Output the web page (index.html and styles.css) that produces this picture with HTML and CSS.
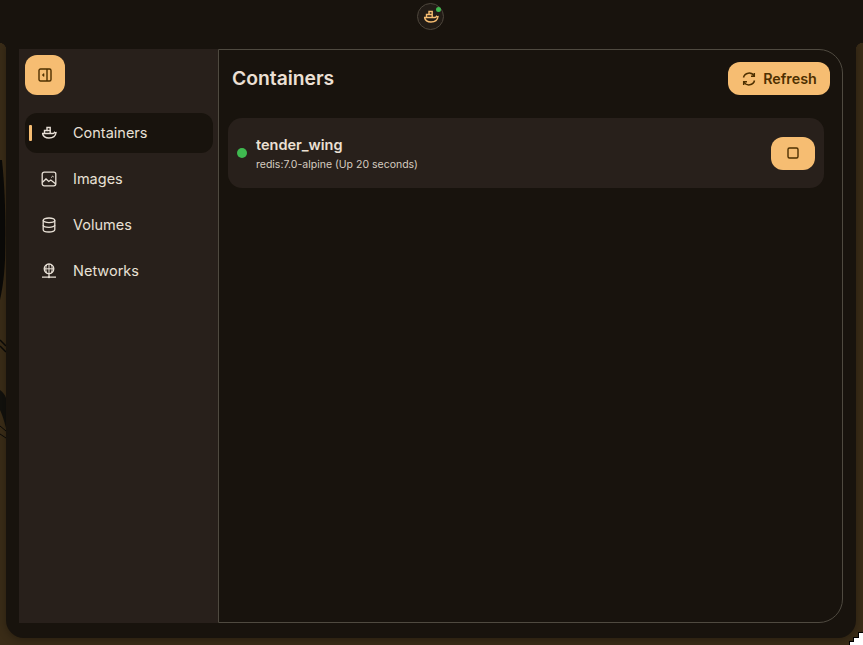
FILE: index.html
```html
<!DOCTYPE html>
<html lang="en">

<head>
    <meta charset="UTF-8">
    <meta name="viewport" content="width=device-width, initial-scale=1.0">
    <title>Containers</title>
    <link rel="stylesheet" href="styles.css">
</head>

<body>
    <!-- wallpaper showing at the left edge -->
    <svg class="wallpaper" width="6" height="300" viewBox="0 0 6 300" fill="none">
        <path d="M0 10h2c3 30 4 60 3 100-1 20-3 30-5 40z" fill="#0b0a08" />
        <path d="M0 190l6 6M0 196l6 6" stroke="#0b0a08" stroke-width="1.500" />
        <path d="M0 240c3 2 5 5 6 8v30c-2-8-4-14-6-18z" fill="#12110d" />
        <path d="M0 276l6 5M0 284l6 4" stroke="#0b0a08" />
    </svg>
    <div class="topbar">
        <div class="tray-icon">
            <svg width="16" height="16" viewBox="0 0 16 16" fill="none" stroke="#f6bd72" stroke-width="1.400">
                <path d="M1 8.500h10.500c.8 0 1.600-.5 2-1.200.5.400 1 .500 1.500.400-.4 3-2.800 5.300-7 5.300-3.600 0-5.800-1.500-6.500-4.500z" />
                <path d="M3.500 8.200V5.500H6V2.500h3.200v5.700M6 5.500h3.200" />
            </svg>
            <span class="tray-dot"></span>
        </div>
    </div>
    <div class="window">
        <aside class="sidebar">
            <button class="toggle-btn">
                <svg width="14" height="14" viewBox="0 0 14 14" fill="none" stroke="#4e3000" stroke-width="1.400">
                    <rect x="1" y="1" width="12" height="12" rx="1.500" />
                    <path d="M9 1v12" />
                    <path d="M6 5.500v3L4.200 7z" fill="#4e3000" stroke-width="0.600" />
                </svg>
            </button>
            <nav class="nav">
                <a class="nav-item active">
                    <span class="nav-marker"></span>
                    <svg class="nav-icon" width="16" height="16" viewBox="0 0 16 16" fill="none" stroke="#e8e0d6" stroke-width="1.400">
                        <path d="M1 8.500h10.500c.8 0 1.600-.5 2-1.200.5.400 1 .500 1.500.400-.4 3-2.800 5.300-7 5.300-3.600 0-5.800-1.500-6.500-4.500z" />
                        <path d="M3.500 8.200V5.500H6V2.500h3.200v5.700" />
                        <path d="M6 5.500h3.200" />
                    </svg>
                    <span>Containers</span>
                </a>
                <a class="nav-item">
                    <svg class="nav-icon" width="16" height="16" viewBox="0 0 16 16" fill="none" stroke="#e8e0d6" stroke-width="1.300">
                        <rect x="1.200" y="1.200" width="13.600" height="13.600" rx="2" />
                        <path d="M1.200 11.500l3.800-3.500 2.800 2.500 2-1.500 5 4" />
                        <path d="M10.200 6.500l1.500-1.300 1 .8" stroke-width="1" />
                    </svg>
                    <span>Images</span>
                </a>
                <a class="nav-item">
                    <svg class="nav-icon" width="16" height="16" viewBox="0 0 16 16" fill="none" stroke="#e8e0d6" stroke-width="1.300">
                        <ellipse cx="8" cy="3.300" rx="5.800" ry="2.300" />
                        <path d="M2.200 3.300v9.400c0 1.200 2.600 2.300 5.800 2.300s5.800-1.100 5.800-2.300V3.300" />
                        <path d="M2.200 8c0 1.200 2.600 2.300 5.800 2.300s5.800-1.100 5.800-2.300" />
                    </svg>
                    <span>Volumes</span>
                </a>
                <a class="nav-item">
                    <svg class="nav-icon" width="16" height="16" viewBox="0 0 16 16" fill="none" stroke="#e8e0d6" stroke-width="1.300">
                        <circle cx="8" cy="5.800" r="4.800" />
                        <path d="M3.200 5.800h9.600M8 1v9.600M5.600 1.800c-1 2.500-1 5.500 0 8M10.400 1.800c1 2.500 1 5.500 0 8" stroke-width="1" />
                        <path d="M8 10.500v3.500M1 14.200h14" />
                        <circle cx="8" cy="14.200" r="1" fill="#e8e0d6" stroke="none" />
                    </svg>
                    <span>Networks</span>
                </a>
            </nav>
        </aside>
        <main class="content">
            <header class="content-header">
                <h1>Containers</h1>
                <button class="refresh-btn">
                    <svg width="16" height="16" viewBox="0 0 16 16" fill="none" stroke="#4e3000" stroke-width="1.500">
                        <path d="M2.500 6.500A5.700 5.700 0 0 1 13 5" />
                        <path d="M13.500 9.500A5.700 5.700 0 0 1 3 11" />
                        <path d="M13.300 2v3.300H10M2.700 14v-3.300H6" />
                    </svg>
                    Refresh
                </button>
            </header>
            <div class="container-row">
                <span class="status-dot"></span>
                <div class="container-info">
                    <div class="container-name">tender_wing</div>
                    <div class="container-meta">redis:7.0-alpine (Up 20 seconds)</div>
                </div>
                <button class="stop-btn">
                    <svg width="14" height="14" viewBox="0 0 14 14" fill="none" stroke="#4e3000" stroke-width="1.400">
                        <rect x="2" y="2" width="10" height="10" rx="1.500" />
                    </svg>
                </button>
            </div>
        </main>
    </div>
    <!-- mouse pointer, bottom right corner -->
    <svg class="pointer" width="14" height="13" viewBox="0 0 14 13" shape-rendering="crispEdges">
        <path d="M9 0h5v13H0V9h4V5h5z" fill="#000" />
        <path d="M10 1h4v12H1v-3h4V6h5z" fill="#fff" />
    </svg>
</body>

</html>
```

FILE: styles.css
```css
body {
    position: relative;
    margin: 0;
    height: 645px;
    overflow: hidden;
    font-family: 'Inter', 'Roboto', sans-serif;
    background-color: #3a2c17;
    color: #ece0d4;
}

.wallpaper {
    position: absolute;
    left: 0;
    top: 150px;
}

.pointer {
    position: absolute;
    right: 0;
    bottom: 0;
}

.topbar {
    position: relative;
    z-index: 1;
    height: 43px;
    background-color: #18130d;
    display: flex;
    justify-content: center;
    padding-top: 3px;
    box-sizing: border-box;
}

.tray-icon {
    position: relative;
    width: 27px;
    height: 27px;
    border: 1px solid #4d463c;
    border-radius: 50%;
    box-sizing: border-box;
    background-color: #221c16;
    display: flex;
    align-items: center;
    justify-content: center;
    margin-left: -2px;
}

.tray-dot {
    position: absolute;
    top: 3px;
    right: 2px;
    width: 5px;
    height: 5px;
    border-radius: 50%;
    background-color: #3fb950;
}

.window {
    position: relative;
    height: 595px;
    margin: 0 7px 0 6px;
    padding: 6px 13px 15px 13px;
    box-sizing: border-box;
    background-color: #18130d;
    border-radius: 0 0 18px 18px;
    box-shadow: 0 2px 8px rgba(0, 0, 0, 0.3);
    display: flex;
}

/* inverted corners where the window meets the top bar */
.window::before,
.window::after {
    content: "";
    position: absolute;
    top: 0;
    width: 7px;
    height: 7px;
}

.window::before {
    left: -7px;
    background: radial-gradient(circle at 0 100%, transparent 7px, #18130d 7.5px);
}

.window::after {
    right: -7px;
    background: radial-gradient(circle at 100% 100%, transparent 7px, #18130d 7.5px);
}

.sidebar {
    width: 199px;
    background-color: #28201b;
    padding: 6px 5px 6px 6px;
    box-sizing: border-box;
    flex-shrink: 0;
}

.toggle-btn {
    width: 40px;
    height: 40px;
    border: none;
    border-radius: 12px;
    background-color: #f6bd72;
    display: flex;
    align-items: center;
    justify-content: center;
    padding: 0;
}

.nav {
    margin-top: 18px;
    display: flex;
    flex-direction: column;
    gap: 6px;
}

.nav-item {
    position: relative;
    height: 40px;
    box-sizing: border-box;
    padding: 0 0 1px 16px;
    border-radius: 12px;
    display: flex;
    align-items: center;
    gap: 16px;
    font-size: 14.5px;
    color: #e8e0d6;
}

.nav-item.active {
    background-color: #18130d;
}

.nav-marker {
    position: absolute;
    left: 4px;
    top: 12px;
    width: 3px;
    height: 16px;
    border-radius: 1px;
    background-color: #f6bd72;
}

.content {
    flex: 1;
    background-color: #18130d;
    border: 1px solid #4f4a40;
    border-radius: 0 24px 24px 0;
    box-sizing: border-box;
    padding: 12px 12px 0 9px;
}

.content-header {
    display: flex;
    align-items: center;
    justify-content: space-between;
    padding-left: 4px;
}

h1 {
    margin: 0 0 2px;
    font-size: 19.3px;
    font-weight: 600;
    color: #ece0d4;
}

.refresh-btn {
    height: 33px;
    width: 102px;
    border: none;
    border-radius: 12px;
    background-color: #f6bd72;
    color: #4e3000;
    font-family: inherit;
    font-size: 14.3px;
    font-weight: 600;
    display: flex;
    align-items: center;
    justify-content: center;
    gap: 6px;
    padding: 0;
}

.container-row {
    margin-top: 23px;
    margin-right: 6px;
    height: 70px;
    border-radius: 14px;
    background-color: #28201b;
    display: flex;
    align-items: center;
    padding: 0 9px;
    box-sizing: border-box;
}

.status-dot {
    width: 10px;
    height: 10px;
    border-radius: 50%;
    background-color: #3fb950;
    margin-right: 9px;
}

.container-info {
    flex: 1;
}

.container-name {
    font-size: 14.5px;
    font-weight: 600;
    color: #ece0d4;
    margin-bottom: 5px;
}

.container-meta {
    font-size: 10.5px;
    color: #d6ccc0;
}

.stop-btn {
    width: 44px;
    height: 33px;
    border: none;
    border-radius: 12px;
    background-color: #f6bd72;
    display: flex;
    align-items: center;
    justify-content: center;
    padding: 0;
}
```
